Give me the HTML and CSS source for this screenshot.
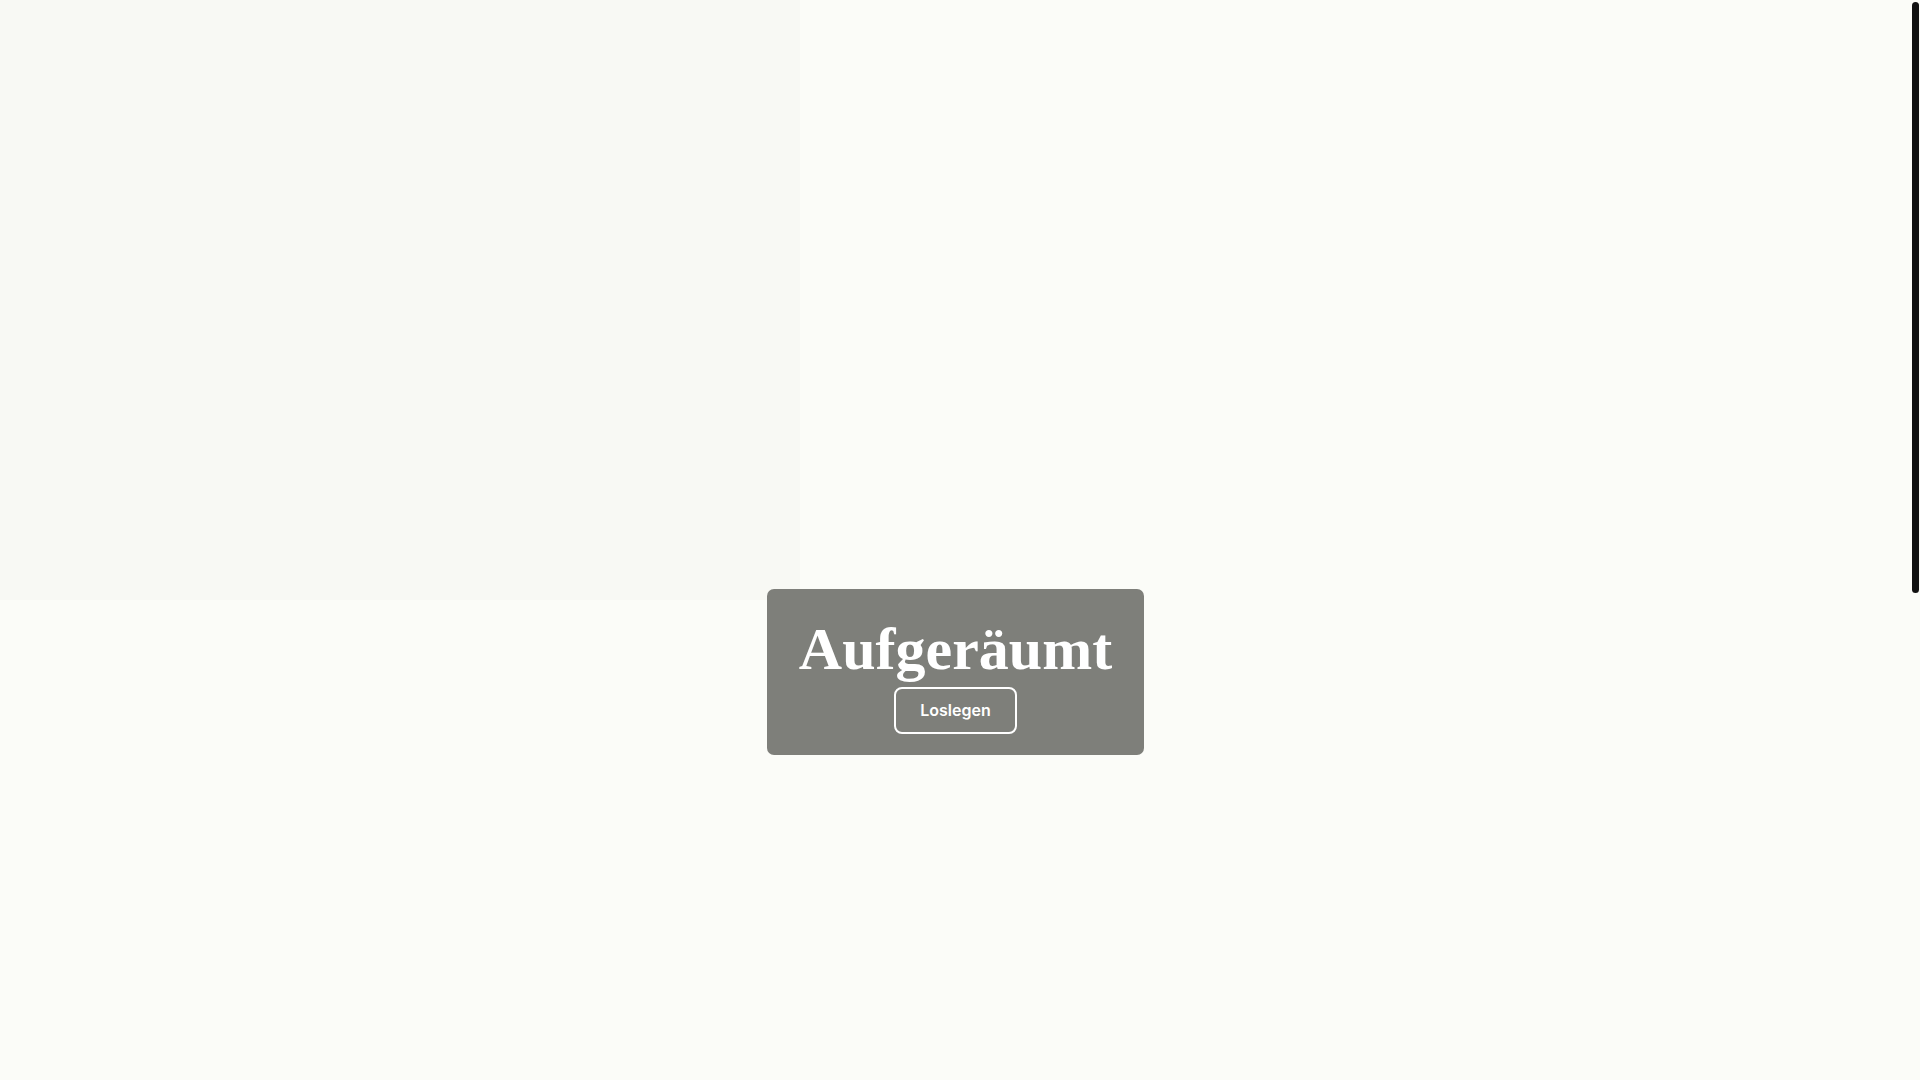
FILE: index.html
```html
<!DOCTYPE html>
<html lang="de">
<head>
<meta charset="utf-8">
<title>Aufgeräumt</title>
<link rel="stylesheet" href="styles.css">
</head>
<body>
<main class="page">
  <div class="backdrop"></div>
  <section class="hero">
    <div class="card">
      <h1 class="title">Aufgeräumt</h1>
      <button class="cta" type="button">Loslegen</button>
    </div>
  </section>
</main>
<div class="scroll-thumb" aria-hidden="true"></div>
</body>
</html>
```

FILE: styles.css
```css
html {
  background: #fbfcf8;
  scrollbar-width: none;
}
html::-webkit-scrollbar {
  display: none;
}
body {
  margin: 0;
  background: #fbfcf8;
  font-family: "Inter", "Liberation Sans", sans-serif;
}
.page {
  position: relative;
  min-height: 1968px;
  padding-right: 9px;
}
.backdrop {
  position: absolute;
  left: 0;
  top: 0;
  width: 800px;
  height: 600px;
  background: #f8f9f4;
}
.hero {
  position: relative;
  display: flex;
  justify-content: center;
  padding-top: 589px;
}
.card {
  display: flex;
  flex-direction: column;
  align-items: center;
  background: #7e7f7a;
  border-radius: 7px;
  padding: 24px 32px 21px;
}
.title {
  margin: 0;
  font-family: "Liberation Serif", "Times New Roman", serif;
  font-weight: 700;
  font-size: 60px;
  line-height: 72px;
  color: #ffffff;
}
.cta {
  margin: 2px 0 0;
  padding: 12px 24px;
  border: 2px solid #ffffff;
  border-radius: 8px;
  background: transparent;
  color: #ffffff;
  font-family: "Inter", sans-serif;
  font-weight: 600;
  font-size: 16px;
  line-height: 19px;
}
.scroll-thumb {
  position: fixed;
  top: 2px;
  right: 1px;
  width: 7px;
  height: 591px;
  border-radius: 4px;
  background: #111111;
}
```
